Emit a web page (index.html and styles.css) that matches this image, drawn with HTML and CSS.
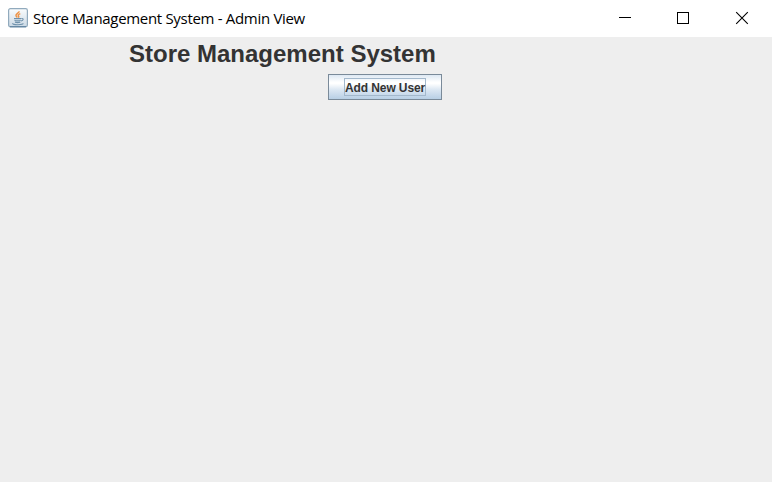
FILE: index.html
```html
<!DOCTYPE html>
<html lang="en">
<head>
<meta charset="utf-8">
<title>Store Management System - Admin View</title>
<link rel="stylesheet" href="styles.css">
</head>
<body>
<header class="titlebar">
  <svg class="app-icon" width="20" height="20" viewBox="0 0 20 20">
    <defs><linearGradient id="tile" x1="0" y1="0" x2="0" y2="1"><stop offset="0" stop-color="#fafcfd"/><stop offset="1" stop-color="#cbd9e5"/></linearGradient></defs>
    <rect x=".6" y=".6" width="18.8" height="18.2" rx="1.8" fill="url(#tile)" stroke="#91aabd" stroke-width="1.2"/>
    <path d="M2 18.7H18" stroke="#587d9c" stroke-width="1"/>
    <path d="M11 3.2C11.5 5 7.2 6 8 7.8 8.3 8.6 9 9 9.2 9.6M12.3 5.6C9.8 6.7 10 7.5 10.7 8.3 11 8.8 10.7 9.2 10.3 9.6" fill="none" stroke="#ee9245" stroke-width="1.5"/>
    <path d="M6 10.6H13M6.5 12.4Q9.5 13.4 12.7 12.4M7 14.2Q9.5 15 12.3 14.2M13.3 10.5C16 10 15.6 12.6 13 13M4.5 15.3Q4.5 16.8 10 16.7 15 16.6 15.3 15.4" fill="none" stroke="#6f91ab" stroke-width="1.1"/>
  </svg>
  <span class="caption">Store Management System - Admin View</span>
  <svg class="controls" width="174" height="37" viewBox="0 0 174 37" fill="none" stroke="#000">
    <path d="M21 17.5H33"/>
    <rect x="79.5" y="12.5" width="11" height="11"/>
    <path d="M138.2 12.2L149.8 23.8M149.8 12.2L138.2 23.8" stroke-width="1.1"/>
  </svg>
</header>
<main class="content">
  <h1 class="heading">Store Management System</h1>
  <button class="add-user"><span class="add-label">Add New User</span></button>
</main>
</body>
</html>
```

FILE: styles.css
```css
* { box-sizing: border-box; }
body { margin: 0; height: 482px; overflow: hidden; background: #eee; display: flex; flex-direction: column; }
.titlebar { height: 37px; flex: none; display: flex; align-items: center; padding-left: 8px; background: #fff; }
.app-icon { flex: none; margin-bottom: 2px; }
.caption { margin: 0 0 2px 5px; font: 15px/20px "Open Sans", sans-serif; letter-spacing: -0.31px; color: #000; white-space: nowrap; }
.controls { flex: none; margin-left: auto; }
.content { flex: 1; display: flex; flex-direction: column; align-items: flex-start; }
.heading { margin: 3px 0 0 129px; font: bold 24px/28px "Liberation Sans", sans-serif; color: #333; white-space: nowrap; }
.add-user { width: 114px; height: 26px; margin: 6px 0 0 328px; padding: 0; display: flex; align-items: center; justify-content: center; border: 1px solid #7a8a99; border-radius: 0; background: linear-gradient(#dde8f3 0%, #fff 30%, #fff 36%, #dde8f3 60%, #b8cfe5 100%); }
.add-label { width: 82px; height: 18px; border: 1px solid #a3b8cc; font: bold 12px/18px "Liberation Sans", sans-serif; letter-spacing: -0.1px; color: #333; text-align: center; white-space: nowrap; }
```
